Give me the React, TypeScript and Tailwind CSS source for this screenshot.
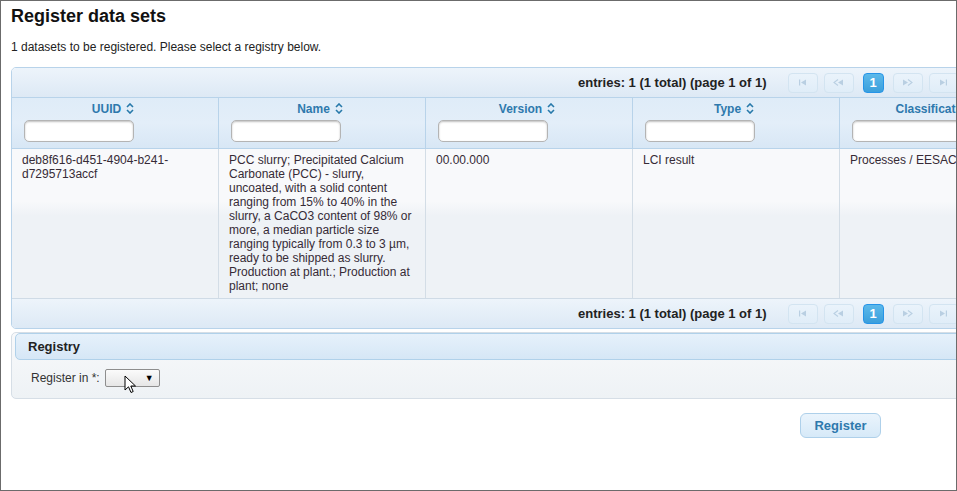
import type { ReactNode } from "react";

const COLUMNS = ["UUID", "Name", "Version", "Type", "Classification"];

function SortIcon() {
  return (
    <svg width="8" height="11" viewBox="0 0 8 11" className="inline-block ml-[5px] -mt-[2px]">
      <path d="M1 4 L4 1 L7 4" fill="none" stroke="#2779aa" strokeWidth="1.6" />
      <path d="M1 7 L4 10 L7 7" fill="none" stroke="#2779aa" strokeWidth="1.6" />
    </svg>
  );
}

function PageBtn({ children, active }: { children: ReactNode; active?: boolean }) {
  if (active) {
    return (
      <div className="w-[21px] h-[20px] rounded-[4px] border border-[#2694e8] bg-gradient-to-b from-[#5cb9ea] to-[#3a9fdc] text-white text-[13px] font-bold flex items-center justify-center">
        {children}
      </div>
    );
  }
  return (
    <div className="w-[30px] h-[20px] rounded-[4px] border border-[#d3e4f1] bg-gradient-to-b from-[#eaf3fb] to-[#e0edf8] flex items-center justify-center">
      {children}
    </div>
  );
}

function Paginator() {
  const c = "#b9cfe2";
  return (
    <div className="h-[29px] flex items-center pl-[566px] bg-gradient-to-b from-[#edf4fb] to-[#dde9f5]">
      <span className="text-[13px] font-bold text-[#222] mr-[21px]">entries: 1 (1 total) (page 1 of 1)</span>
      <div className="flex items-center">
        <PageBtn>
          <svg width="9" height="7" viewBox="0 0 9 7">
            <rect x="1" y="0.5" width="1.2" height="6" fill={c} />
            <path d="M8 0.5 L3 3.5 L8 6.5 Z" fill={c} />
          </svg>
        </PageBtn>
        <div className="w-[6px]" />
        <PageBtn>
          <svg width="11" height="7" viewBox="0 0 11 7">
            <path d="M5 0.5 L1 3.5 L5 6.5" fill="none" stroke={c} strokeWidth="1.1" />
            <path d="M10 0.5 L5 3.5 L10 6.5 Z" fill={c} />
          </svg>
        </PageBtn>
        <div className="w-[9px]" />
        <PageBtn active>1</PageBtn>
        <div className="w-[9px]" />
        <PageBtn>
          <svg width="11" height="7" viewBox="0 0 11 7">
            <path d="M1 0.5 L6 3.5 L1 6.5 Z" fill={c} />
            <path d="M6 0.5 L10 3.5 L6 6.5" fill="none" stroke={c} strokeWidth="1.1" />
          </svg>
        </PageBtn>
        <div className="w-[6px]" />
        <PageBtn>
          <svg width="9" height="7" viewBox="0 0 9 7">
            <path d="M1 0.5 L6 3.5 L1 6.5 Z" fill={c} />
            <rect x="6.8" y="0.5" width="1.2" height="6" fill={c} />
          </svg>
        </PageBtn>
      </div>
    </div>
  );
}

export default function App() {
  return (
    <div
      className="h-[491px] border border-[#6b6b6b] bg-white overflow-hidden text-[#362b36]"
      style={{ fontFamily: '"Liberation Sans", Arial, sans-serif' }}
    >
      <div className="pl-[10px] pt-[4px]">
        <h1 className="text-[18px] leading-[22px] font-bold text-[#111]">Register data sets</h1>
        <p className="mt-[13px] text-[12px] leading-[14px] text-[#222]">
          1 datasets to be registered. Please select a registry below.
        </p>

        {/* Data table */}
        <div className="mt-[13px] w-[1200px] border border-[#b8d3ea] rounded-tl-[5px] rounded-bl-[5px] overflow-hidden">
          <div className="border-b border-[#b8d3ea]">
            <Paginator />
          </div>

          <div className="flex border-b border-[#b8d3ea] bg-gradient-to-b from-[#dfecf8] via-[#e3eef9] to-[#d8e7f5]">
            {COLUMNS.map((col, i) => (
              <div
                key={col}
                className={`shrink-0 h-[50px] flex flex-col pt-[4px] ${i > 0 ? "w-[207px] border-l border-[#b8d3ea]" : "w-[206px]"}`}
              >
                <div className="text-center text-[12px] leading-[14px] font-bold text-[#2e79ad] whitespace-nowrap pr-[4px]">
                  {col}
                  <SortIcon />
                </div>
                <input
                  className="mt-[4px] ml-[12px] w-[110px] h-[22px] rounded-[5px] border border-[#b4b4b4] bg-white shadow-[inset_0_1px_2px_rgba(0,0,0,0.25)] outline-none"
                  readOnly
                />
              </div>
            ))}
          </div>

          <div className="flex h-[150px] border-b border-[#cfdbe6] bg-[linear-gradient(to_bottom,#f8f9fb_0%,#f8f9fb_35%,#eef2f6_45%,#eef2f6_100%)] text-[12px] leading-[14px]">
            <div className="w-[206px] shrink-0 px-[10px] pt-[4px]">
              deb8f616-d451-4904-b241-
              <br />
              d7295713accf
            </div>
            <div className="w-[207px] shrink-0 px-[10px] pt-[4px] border-l border-[#d3dde6]">
              PCC slurry; Precipitated Calcium Carbonate (PCC) - slurry, uncoated, with a solid content ranging
              from 15% to 40% in the slurry, a CaCO3 content of 98% or more, a median particle size ranging
              typically from 0.3 to 3 µm, ready to be shipped as slurry. Production at plant.; Production at
              plant; none
            </div>
            <div className="w-[207px] shrink-0 px-[10px] pt-[4px] border-l border-[#d3dde6]">00.00.000</div>
            <div className="w-[207px] shrink-0 px-[10px] pt-[4px] border-l border-[#d3dde6]">LCI result</div>
            <div className="w-[207px] shrink-0 px-[10px] pt-[4px] border-l border-[#d3dde6] whitespace-nowrap">
              Processes / EESAC
            </div>
          </div>

          <Paginator />
        </div>

        {/* Registry panel */}
        <div className="mt-[3px] w-[1200px] border border-[#d6dee6] rounded-[5px] bg-gradient-to-b from-[#f8f9fb] to-[#eef2f5] pl-[3px] pb-[11px]">
          <div className="h-[27px] border border-[#b0d1ea] rounded-[5px] bg-gradient-to-b from-[#e6f1fb] to-[#d6e7f6] flex items-center pl-[12px]">
            <span className="text-[13px] font-bold text-[#222]">Registry</span>
          </div>
          <div className="mt-[9px] pl-[16px] flex items-center">
            <span className="text-[12px] text-[#333] mr-[5px]">Register in *:</span>
            <div className="relative w-[55px] h-[18px] border border-[#8e8e8e] rounded-[2px] bg-gradient-to-b from-[#fbfbfb] to-[#e6e6e6] flex items-center justify-end pr-[5px]">
              <span className="text-[9px] leading-none text-black">▼</span>
              <svg width="13" height="20" viewBox="0 0 13 20" className="absolute left-[18px] top-[5px]">
                <path
                  d="M1 1 L1 15 L4.5 11.8 L7 17.5 L9.2 16.5 L6.8 11 L11.5 11 Z"
                  fill="#fff"
                  stroke="#000"
                  strokeWidth="1"
                  strokeLinejoin="round"
                />
              </svg>
            </div>
          </div>
        </div>

        <div className="flex pl-[789px] mt-[14px]">
          <button className="w-[81px] h-[25px] rounded-[6px] border border-[#aed0ea] bg-gradient-to-b from-[#eaf4fc] to-[#d6e9f8] text-[13px] font-bold text-[#2e79ad]">
            Register
          </button>
        </div>
      </div>
    </div>
  );
}
